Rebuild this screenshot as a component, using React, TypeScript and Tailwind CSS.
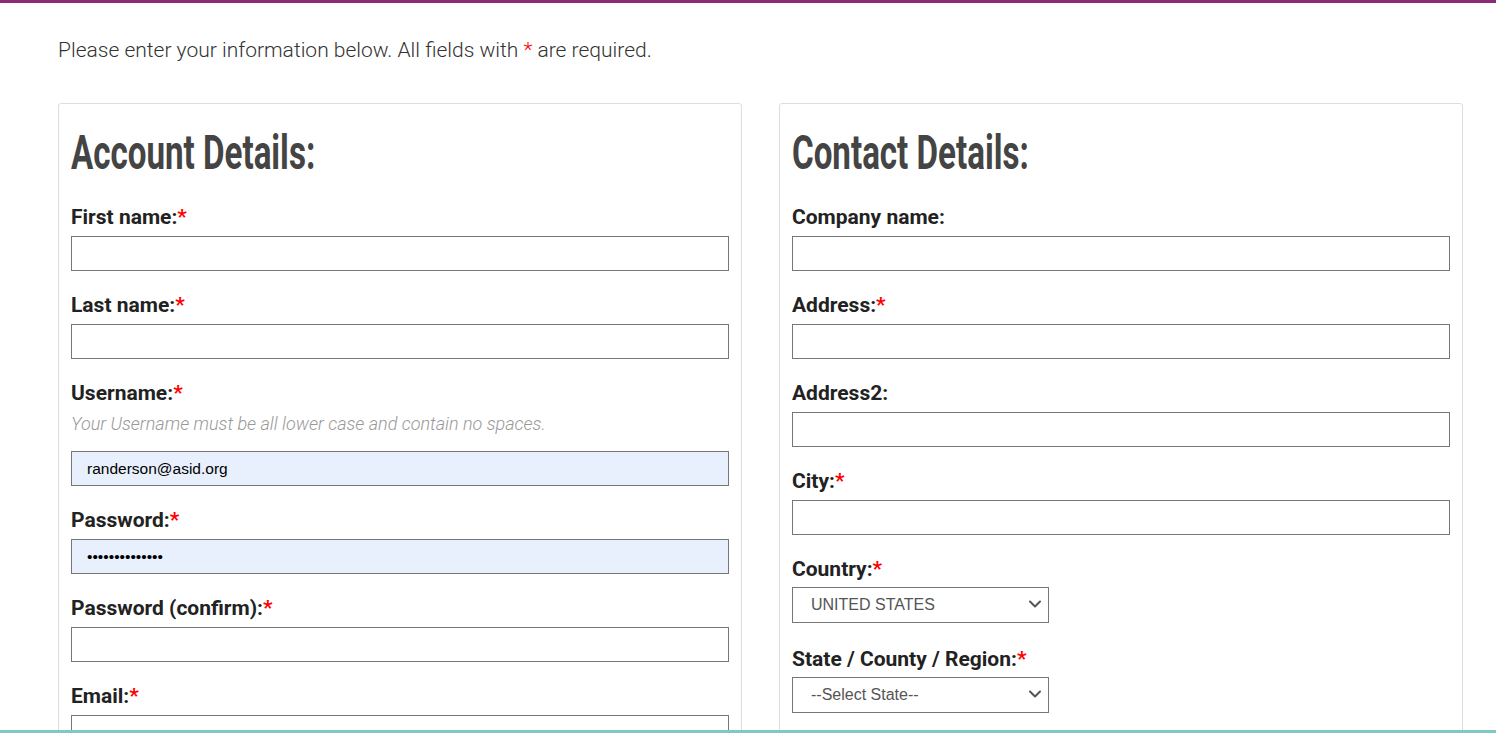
import React from "react";

const ROBOTO = { fontFamily: "Roboto, 'Noto Sans', sans-serif" };
const ARIAL = { fontFamily: "'Liberation Sans', Arial, sans-serif" };

function Star() {
  return <span className="text-[#ff0000]">*</span>;
}

function Label({ text, required, mb = "mb-[7px]" }: { text: string; required?: boolean; mb?: string }) {
  return (
    <div className={`text-[21px] leading-[24px] font-bold text-[#222] ${mb}`} style={ROBOTO}>
      {text}
      {required && <Star />}
    </div>
  );
}

function TextField({
  label,
  required,
  hint,
  value,
  type = "text",
  filled,
}: {
  label: string;
  required?: boolean;
  hint?: string;
  value?: string;
  type?: string;
  filled?: boolean;
}) {
  return (
    <div className="mb-[22px]">
      <Label text={label} required={required} />
      {hint && (
        <div className="text-[18px] leading-[24px] italic font-light text-[#999] mb-[15px]" style={ROBOTO}>
          {hint}
        </div>
      )}
      <input
        type={type}
        defaultValue={value}
        readOnly
        className={`block w-full h-[35px] border border-[#767676] px-[15px] text-[15.5px] text-black outline-none ${
          filled ? "bg-[#e8f0fe]" : "bg-white"
        }`}
        style={ARIAL}
      />
    </div>
  );
}

function SelectField({ label, value }: { label: string; value: string }) {
  return (
    <div className="mb-[24px]">
      <Label text={label} required mb="mb-[6px]" />
      <div className="relative w-[257px]">
        <select
          defaultValue={value}
          className="block w-full h-[36px] appearance-none border border-[#767676] bg-white pl-[18px] pr-8 text-[16px] text-[#555] outline-none"
          style={ARIAL}
        >
          <option>{value}</option>
        </select>
        <svg
          className="pointer-events-none absolute right-[8px] top-[13px]"
          width="12"
          height="8"
          viewBox="0 0 12 8"
          fill="none"
        >
          <path d="M1 1.5l5 5 5-5" stroke="#555" strokeWidth="2" strokeLinecap="round" strokeLinejoin="round" />
        </svg>
      </div>
    </div>
  );
}

function Panel({ title, children }: { title: string; children: React.ReactNode }) {
  return (
    <div className="flex-1 border border-[#dddddd] rounded-[3px] px-[12px] pt-[19px]">
      <h2 className="h-[60px] mb-[22px] whitespace-nowrap">
        <span
          className="inline-block origin-left scale-x-[0.69] text-[48px] leading-[60px] font-bold text-[#444]"
          style={ROBOTO}
        >
          {title}
        </span>
      </h2>
      {children}
    </div>
  );
}

export default function App() {
  return (
    <div className="h-[733px] overflow-hidden flex flex-col bg-white">
      <div className="h-[3px] bg-[#8c2a76] shrink-0" />
      <div className="flex-1 overflow-hidden pl-[58px] pr-[33px]">
        <p className="mt-[33px] text-[21px] leading-[28px] font-light text-[#333]" style={ROBOTO}>
          Please enter your information below. All fields with <Star /> are required.
        </p>
        <div className="mt-[39px] flex gap-[37px]">
          <Panel title="Account Details:">
            <TextField label="First name:" required />
            <TextField label="Last name:" required />
            <TextField
              label="Username:"
              required
              hint="Your Username must be all lower case and contain no spaces."
              value="randerson@asid.org"
              filled
            />
            <TextField label="Password:" required type="password" value="ranpassword123" filled />
            <TextField label="Password (confirm):" required type="password" />
            <TextField label="Email:" required />
          </Panel>
          <Panel title="Contact Details:">
            <TextField label="Company name:" />
            <TextField label="Address:" required />
            <TextField label="Address2:" />
            <TextField label="City:" required />
            <SelectField label="Country:" value="UNITED STATES" />
            <SelectField label="State / County / Region:" value="--Select State--" />
          </Panel>
        </div>
      </div>
      <div className="h-[3px] bg-[#7fc9c4] shrink-0" />
    </div>
  );
}
